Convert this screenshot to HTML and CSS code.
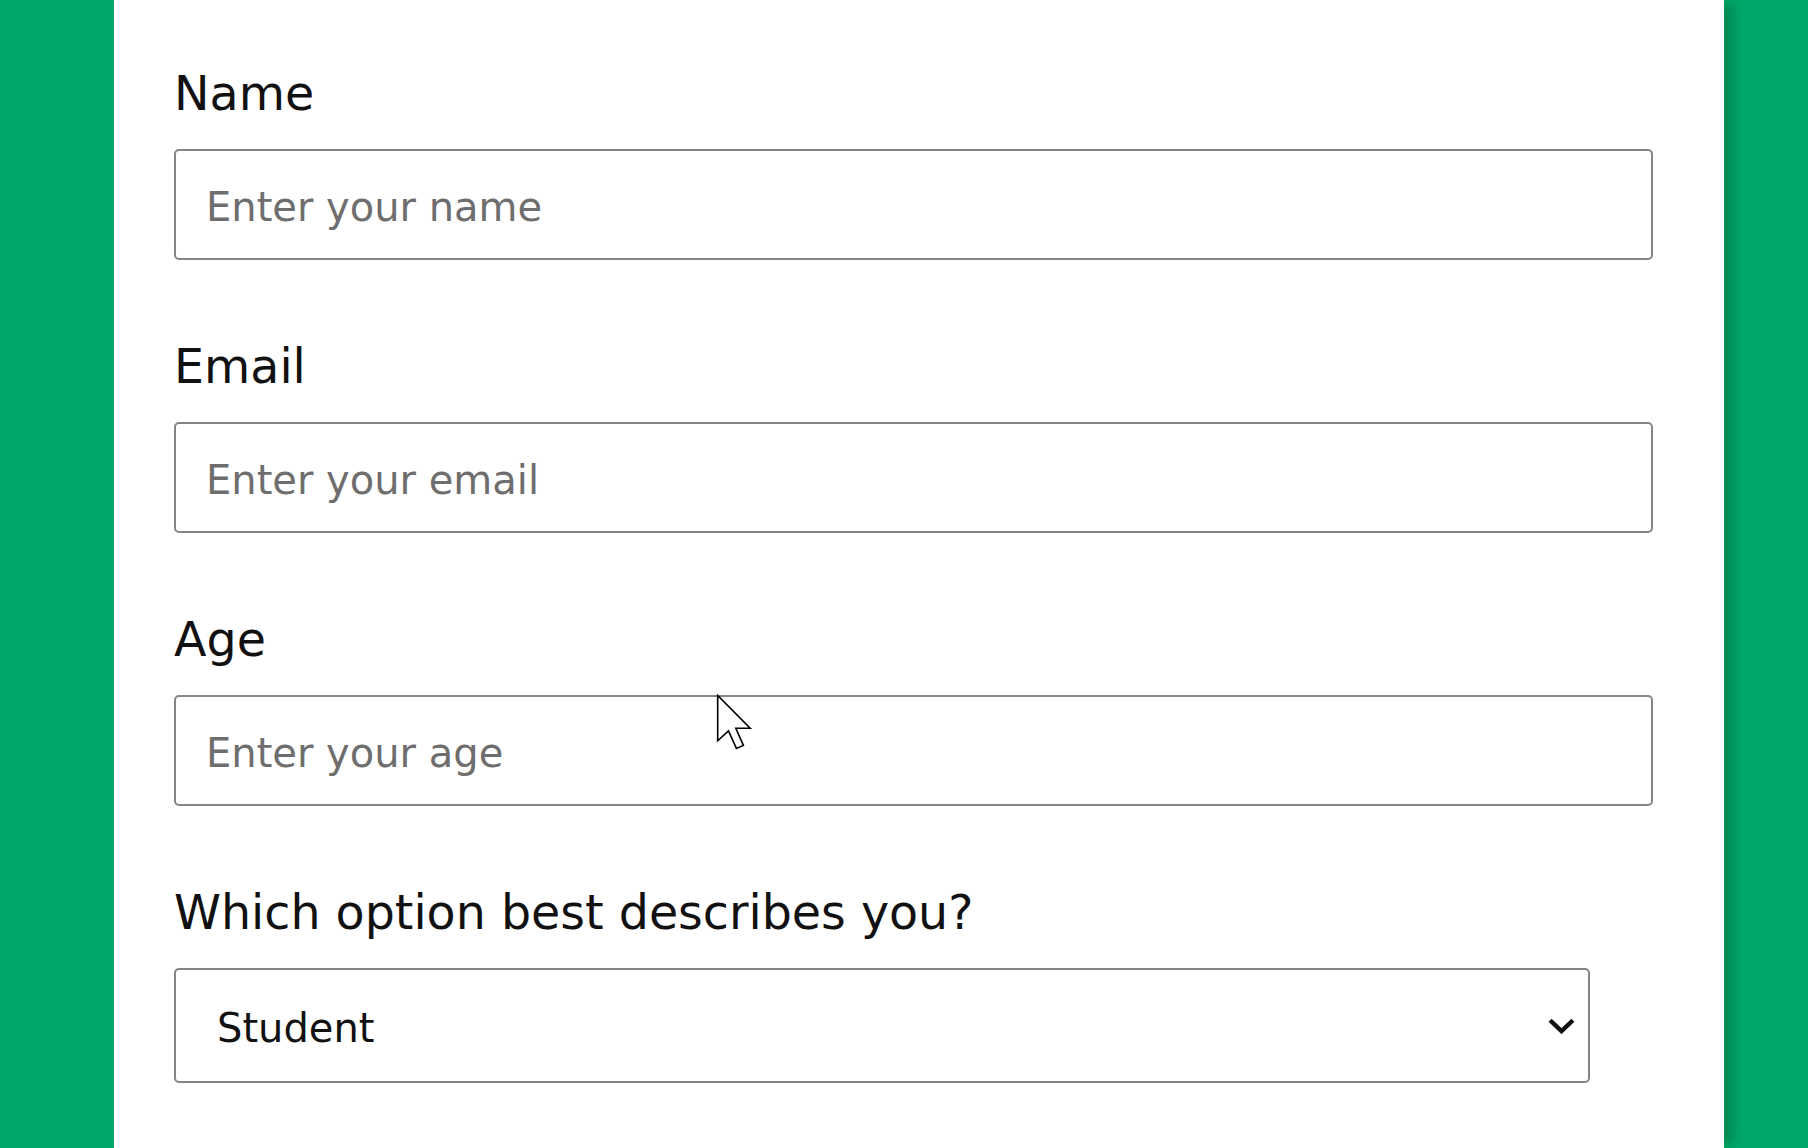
FILE: index.html
```html
<!DOCTYPE html>
<html lang="en">
<head>
<meta charset="utf-8">
<title>Form</title>
<link rel="stylesheet" href="styles.css">
</head>
<body>
<main class="panel">
  <form class="form">
    <div class="field">
      <label class="label" for="name">Name</label>
      <input class="input" id="name" type="text" placeholder="Enter your name">
    </div>
    <div class="field">
      <label class="label" for="email">Email</label>
      <input class="input" id="email" type="email" placeholder="Enter your email">
    </div>
    <div class="field">
      <label class="label" for="age">Age</label>
      <input class="input" id="age" type="number" placeholder="Enter your age">
    </div>
    <div class="field">
      <label class="label" for="role">Which option best describes you?</label>
      <div class="select-wrap">
        <select class="select" id="role">
          <option>Student</option>
          <option>Full-time job</option>
          <option>Full-time learner</option>
          <option>Prefer not to say</option>
          <option>Other</option>
        </select>
        <svg class="chevron" viewBox="0 0 26 15" width="27" height="16" aria-hidden="true">
          <path d="M2 2 L13 12.5 L24 2" fill="none" stroke="#111" stroke-width="4.2"/>
        </svg>
      </div>
    </div>
  </form>
</main>
<svg class="cursor" viewBox="0 0 12.5 19.5" width="37" height="57" aria-hidden="true">
  <path d="M0.5 0.5 L0.5 16 L4.2 12.6 L6.9 18.6 L9.3 17.6 L6.7 11.7 L11.6 11.7 Z" fill="#fff" stroke="#000" stroke-width="0.55" stroke-linejoin="miter"/>
</svg>
</body>
</html>
```
FILE: styles.css
```css
html, body {
  margin: 0;
  padding: 0;
}

body {
  background: #00a86b;
  min-height: 1148px;
  overflow: hidden;
  font-family: "DejaVu Sans", Verdana, sans-serif;
}

.panel {
  margin-left: 114px;
  width: 1610px;
  min-height: 1148px;
  background: #ffffff;
  box-sizing: border-box;
  padding: 66px 0 0 60px;
  box-shadow: 14px 0 10px -4px rgba(0, 60, 30, 0.28);
}

.form {
  display: flex;
  flex-direction: column;
  gap: 79px;
}

.field {
  display: flex;
  flex-direction: column;
  gap: 27px;
  align-items: flex-start;
}

.label {
  font-size: 47.5px;
  line-height: 56px;
  color: #111111;
}

.input {
  box-sizing: border-box;
  width: 1479px;
  height: 111px;
  border: 2px solid #858585;
  border-radius: 5px;
  padding: 5px 30px 0 30px;
  font-family: "DejaVu Sans", Verdana, sans-serif;
  font-size: 40px;
  color: #111;
  background: #fff;
  outline: none;
  -moz-appearance: textfield;
}

.input::placeholder {
  color: #6e6e6e;
  opacity: 1;
}

.input::-webkit-outer-spin-button,
.input::-webkit-inner-spin-button {
  -webkit-appearance: none;
  margin: 0;
}

.select-wrap {
  position: relative;
  width: 1416px;
}

.select {
  box-sizing: border-box;
  width: 1416px;
  height: 115px;
  border: 2px solid #858585;
  border-radius: 5px;
  padding: 5px 60px 0 41px;
  font-family: "DejaVu Sans", Verdana, sans-serif;
  font-size: 40px;
  color: #111;
  background: #fff;
  appearance: none;
  -webkit-appearance: none;
  outline: none;
}

.chevron {
  position: absolute;
  right: 15px;
  top: 50px;
  pointer-events: none;
}

.cursor {
  position: absolute;
  left: 716px;
  top: 694px;
  pointer-events: none;
}
```
